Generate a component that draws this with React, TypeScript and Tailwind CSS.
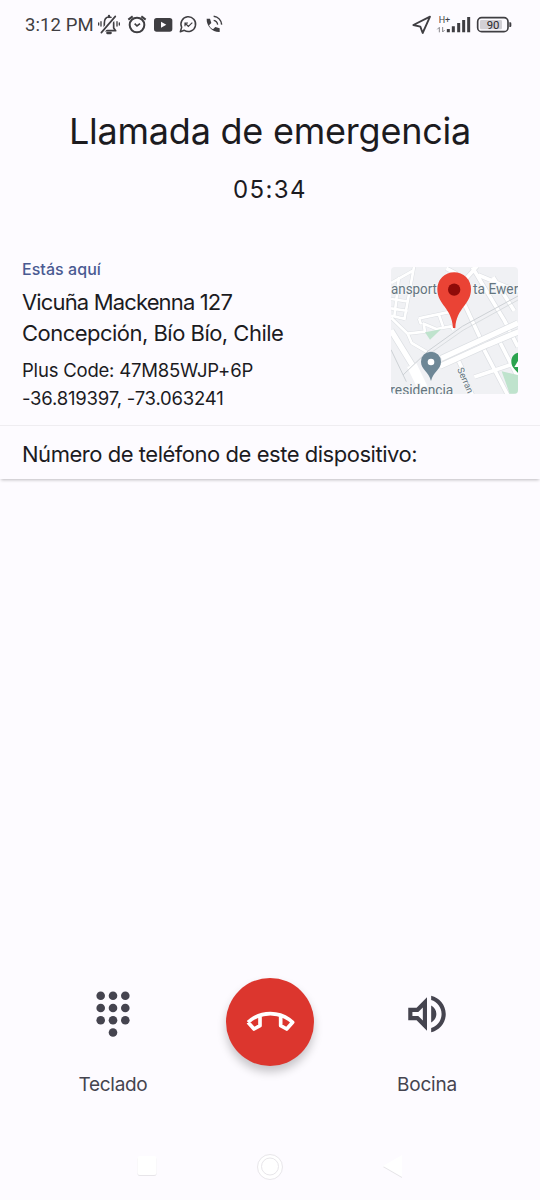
import React from 'react';

const STATUS_COLOR = '#3f3e42';

function StatusBar() {
  return (
    <header className="flex h-[50px] items-center pl-[25px] pr-[26px] text-[#3f3e42]">
      <span className="w-[72px] whitespace-nowrap font-['Roboto',sans-serif] text-[18.5px] leading-[52px] tracking-[0.1px]">3:12 PM</span>

      {/* Left icons */}
      <svg width="128" height="50" viewBox="0 0 384 150" fill="none" stroke={STATUS_COLOR} strokeWidth="5" className="shrink-0">
        {/* Bell, vibrate off */}
        <g strokeLinecap="round" strokeLinejoin="round">
          <path d="M19 92H56L50 84V70C50 58 44 51 36 51S22 58 22 70V84L19 92Z" />
          <path d="M36 51V48" strokeWidth="7" />
          <path d="M31 99H41" strokeWidth="7" />
          <path d="M14 97L55 49" stroke="#fdfbff" strokeWidth="12" />
          <path d="M13 98L55 49" />
          <path d="M12 65V78M5 69V75M60 65V78M67 69V75" strokeWidth="4" />
        </g>
        {/* Alarm clock */}
        <circle cx="120" cy="75" r="22" strokeWidth="6" />
        <path d="M94 59L107 49M146 59L133 49" strokeWidth="6" />
        <path d="M113 71L120 78L129 71" strokeWidth="5" />
        {/* Video */}
        <rect x="171" y="54" width="55" height="41" rx="8" fill={STATUS_COLOR} stroke="none" />
        <path d="M192 65V83L208 74Z" fill="#fdfbff" stroke="none" />
        {/* Chat bubble, missed call */}
        <path d="M250 95L254 82A22 22 0 1 1 262 91Z" strokeLinejoin="round" strokeWidth="4.5" />
        <path d="M264 79V69H273M264 69L274 79L286 68" strokeWidth="3.5" />
        {/* Phone in call */}
        <path
          d="M329 56H339L343 69L336 76C339 82 343 86 348 88L355 81L368 85V96C346 97 328 78 329 56Z"
          fill={STATUS_COLOR}
          stroke="none"
        />
        <path d="M350 49C363 51 373 61 374 74" strokeWidth="4.5" />
        <path d="M350 61C357 62 361 67 362 74" strokeWidth="4" />
      </svg>

      {/* Right icons */}
      <svg width="102" height="50" viewBox="0 0 306 150" fill="none" stroke={STATUS_COLOR} className="ml-auto shrink-0">
        <path d="M4 75L54 50L32 99L25 80Z" strokeWidth="5.5" strokeLinejoin="round" />
        <text x="80" y="68" fill={STATUS_COLOR} stroke="none" fontFamily="Roboto, sans-serif" fontSize="27">H+</text>
        <path d="M82 97V82L76 88M92 81V96L98 90" stroke="#88868b" strokeWidth="3" />
        <path d="M109 97V87M124 97V79M140 97V69M155 97V60M170 97V51" strokeWidth="9" />
        <rect x="197" y="53" width="91" height="42" rx="12" strokeWidth="5" />
        <rect x="204" y="60" width="66" height="28" rx="4" fill="#d2d0d5" stroke="none" />
        <path d="M292 67H295Q298 67 298 71V77Q298 81 295 81H292Z" fill={STATUS_COLOR} stroke="none" />
        <text x="224" y="86" fill="#29282c" stroke="none" fontFamily="Roboto, sans-serif" fontSize="34">90</text>
      </svg>
    </header>
  );
}

const SIDE_STREETS =
  'M34 84L98 48M34 132L88 140M34 160L84 168M34 182L76 192M104 30L74 194M58 66L44 184' +
  'M34 188L84 236L136 230L132 206L170 222L214 214L222 226M84 236L96 264L150 296' +
  'M118 190L214 170M118 190L124 208M178 180L190 214';

const GRID_STREETS =
  'M246 130L302 250M306 270L384 420M278 37L318 104L374 196L415 276M200 40L230 56M296 60L415 110' +
  'M232 308L250 346M262 384L278 420M284 366L415 322M340 66L404 168M260 70L292 34M356 252L415 368';

function LocationMap() {
  return (
    <svg width="127" height="127" viewBox="34 36 381 381" className="mt-px shrink-0 rounded-[4px]">
      <rect x="34" y="36" width="381" height="381" fill="#f0f1f4" />
      {/* Streets */}
      <g fill="none" strokeLinejoin="round">
        <path d={SIDE_STREETS} stroke="#dcdfe3" strokeWidth="11" />
        <path d={GRID_STREETS} stroke="#dcdfe3" strokeWidth="15" />
        <path d={SIDE_STREETS} stroke="#ffffff" strokeWidth="8" />
        <path d={GRID_STREETS} stroke="#ffffff" strokeWidth="11" />
        <path d="M415 204L185 310M425 227L324 269L180 334M34 226L104 340" stroke="#dcdfe3" strokeWidth="20" />
        <path d="M415 204L185 310M425 227L324 269L180 334M34 226L104 340" stroke="#ffffff" strokeWidth="16" />
        <path d="M96 330L130 400" stroke="#ffffff" strokeWidth="30" />
        <path d="M415 123L248 214L145 288L70 360M34 284L80 380" stroke="#cdd1d5" strokeWidth="3" />
        <path d="M415 135L250 226L150 296" stroke="#cdd1d5" strokeWidth="2" />
      </g>
      {/* Parks */}
      <path d="M136 232L184 223L151 254Z" fill="#bfe3cd" />
      <path d="M366 349L415 360V416H390Z" fill="#bfe3cd" />
      <g fontFamily="Roboto, sans-serif" fill="#64757f" stroke="#f5f6f7" strokeWidth="6" paintOrder="stroke">
        <text x="34" y="116" fontSize="42" textLength="138" lengthAdjust="spacingAndGlyphs">ansport</text>
        <text x="280" y="116" fontSize="42" textLength="136" lengthAdjust="spacingAndGlyphs">ta Ewer</text>
        <text x="32" y="420" fontSize="42" textLength="189" lengthAdjust="spacingAndGlyphs">residencia</text>
        <text x="0" y="0" fontSize="28" transform="translate(232 343) rotate(66)">Serran</text>
      </g>
      {/* Nearby places */}
      <path d="M154 378C147 349 124 344 124 320A30 30 0 0 1 184 320C184 344 161 349 154 378Z" fill="#6e8796" />
      <circle cx="154" cy="321" r="10" fill="#ffffff" />
      <path d="M426 292C404 292 395 304 395 321C395 339 414 350 426 365Z" fill="#2aa34e" />
      <path d="M415 318L404 336H415Z" fill="#ffffff" />
      {/* Current position */}
      <path d="M220 219C217 157 173 151 173 102A50.500 50.500 0 0 1 274 102C274 151 230 157 227 219Z" fill="#ea4335" />
      <circle cx="223.500" cy="104" r="18.500" fill="#8f0b09" />
    </svg>
  );
}

function LocationCard() {
  return (
    <section className="h-[229px] text-[#1c1b1f] shadow-[0_2px_3px_-1px_rgba(0,0,0,0.25)]">
      <div className="flex h-[176px] justify-between border-b border-[#efedf1] pl-[22px] pr-[22px] pt-4">
        <div className="-mt-[7px] whitespace-nowrap">
          <p className="text-[16px] font-medium leading-5 tracking-[0.05px] text-[#4a5a92]">Estás aquí</p>
          <p className="mt-[8px] text-[22px] leading-[31px] tracking-[-0.85px]">Vicuña Mackenna 127</p>
          <p className="text-[22px] leading-[31px] tracking-[-0.52px]">Concepción, Bío Bío, Chile</p>
          <p className="mt-[8px] text-[18.5px] leading-[27.5px] tracking-[-0.2px]">Plus Code: 47M85WJP+6P</p>
          <p className="text-[18.5px] leading-[27.5px] tracking-[-0.2px]">-36.819397, -73.063241</p>
        </div>
        <LocationMap />
      </div>
      <p className="whitespace-nowrap pl-[22px] text-[22px] leading-[56px] tracking-[-0.47px]">Número de teléfono de este dispositivo:</p>
    </section>
  );
}

function KeypadIcon() {
  const dots = [0, 1, 2, 3, 4, 5, 6, 7, 8, 10];
  return (
    <svg width="34" height="46" viewBox="0 0 34 46" fill="#45444f">
      {dots.map((n) => (
        <circle key={n} cx={4.7 + (n % 3) * 12.3} cy={4.7 + Math.floor(n / 3) * 12.25} r="4.300" />
      ))}
    </svg>
  );
}

function CallControls() {
  return (
    <div className="flex h-[130px] justify-between px-[62px] text-[19px] text-[#45444f]">
      <button className="flex w-[102px] flex-col items-center pt-[13px]">
        <KeypadIcon />
        <span className="mt-[36px] leading-6 tracking-[-0.3px]">Teclado</span>
      </button>
      <button aria-label="Colgar" className="size-[88px] shrink-0 rounded-full bg-[#dc362e] shadow-[0_6px_10px_rgba(0,0,0,0.22)]">
        <svg width="88" height="88" viewBox="498 24 264 264" fill="none" stroke="#ffffff" strokeWidth="11" strokeLinejoin="round">
          <path d="M564 157Q592 131 631 131T698 157L680 177L662 167V137M600 137V167L582 177L564 157" />
        </svg>
      </button>
      <button className="flex w-[102px] flex-col items-center pt-[11px]">
        <svg width="50" height="50" viewBox="0 0 24 24" fill="#45444f">
          <path d="M3 9v6h4l5 5V4L7 9H3zm7-.17v6.34L7.830 13H5v-2h2.830L10 8.830zM16.500 12c0-1.770-1.020-3.290-2.500-4.030v8.050c1.480-.73 2.500-2.250 2.500-4.020zM14 3.230v2.060c2.890.86 5 3.540 5 6.710s-2.110 5.850-5 6.710v2.060c4.010-.91 7-4.490 7-8.770s-2.990-7.860-7-8.770z" />
        </svg>
        <span className="mt-[34px] leading-6 tracking-[-0.2px]">Bocina</span>
      </button>
    </div>
  );
}

function NavigationBar() {
  return (
    <nav className="flex h-[68px] items-center justify-between px-[136px]">
      <svg width="22" height="28" viewBox="0 0 22 28">
        <rect x="1.500" y="5" width="19" height="19" rx="2.500" fill="#e7e5e9" />
        <rect x="1.500" y="4" width="19" height="19" rx="2.500" fill="#ffffff" />
      </svg>
      <svg width="28" height="28" viewBox="0 0 28 28" fill="#ffffff" stroke="#e8e6ea">
        <circle cx="14" cy="15" r="12.500" />
        <circle cx="14" cy="14.500" r="8.500" />
      </svg>
      <svg width="22" height="28" viewBox="0 0 22 28">
        <path d="M1 15L20 26V4Z" fill="#e5e3e7" />
        <path d="M1 14L20 25V3Z" fill="#ffffff" />
      </svg>
    </nav>
  );
}

export default function App() {
  return (
    <main className="flex h-[1200px] w-[540px] flex-col overflow-hidden bg-[#fdfbff] font-['Inter',sans-serif]">
      <StatusBar />
      <div className="flex h-[200px] flex-col items-center text-[#1c1b1f]">
        <h1 className="mt-[57px] whitespace-nowrap text-[36px] leading-[48px] tracking-[-0.23px]">Llamada de emergencia</h1>
        <p className="mt-[19px] text-[24px] leading-[32px] tracking-[1.400px]">05:34</p>
      </div>
      <LocationCard />
      <div className="mt-auto">
        <CallControls />
        <div className="h-6" />
        <NavigationBar />
      </div>
    </main>
  );
}
